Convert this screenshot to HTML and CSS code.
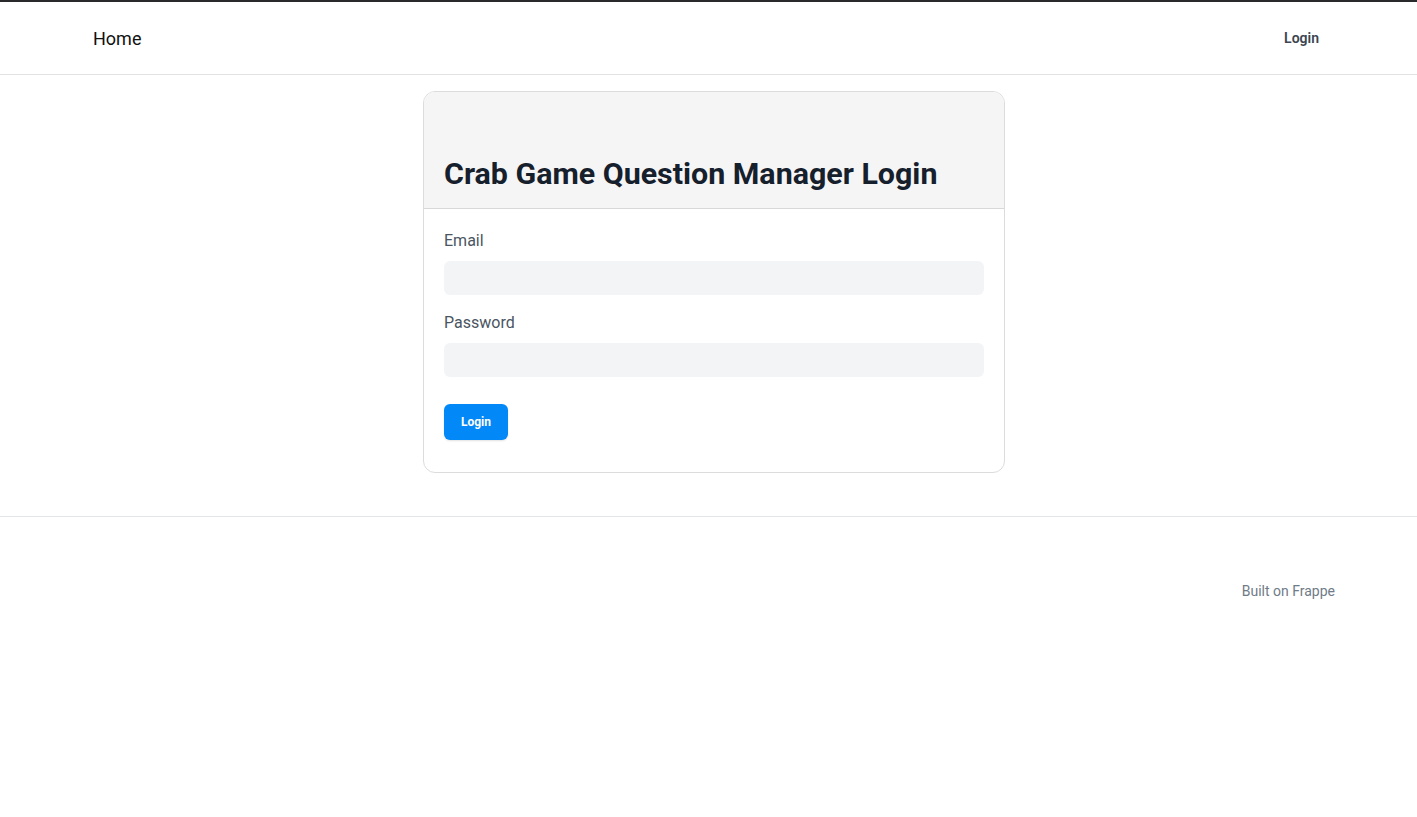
FILE: index.html
```html
<!DOCTYPE html>
<html>
<head>
<meta charset="utf-8">
<link rel="stylesheet" href="styles.css">
</head>
<body>
<header class="navbar">
  <a class="brand" href="#">Home</a>
  <a class="nav-login" href="#">Login</a>
</header>
<main class="main">
  <div class="card">
    <div class="card-header">
      <h1 class="title">Crab Game Question Manager Login</h1>
    </div>
    <div class="card-body">
      <label class="label">Email</label>
      <div class="input"></div>
      <label class="label">Password</label>
      <div class="input"></div>
      <button class="btn">Login</button>
    </div>
  </div>
</main>
<footer class="footer">
  <span class="built">Built on Frappe</span>
</footer>
</body>
</html>
```
FILE: styles.css
```css
* { box-sizing: border-box; }
html, body { margin: 0; padding: 0; }
body {
  font-family: Roboto, "Liberation Sans", sans-serif;
  background: #fff;
  border-top: 2px solid #2a2a2c;
}
a { text-decoration: none; }
.navbar {
  height: 73px;
  border-bottom: 1px solid #e2e2e2;
  display: flex;
  align-items: center;
  justify-content: space-between;
  padding: 0 98px 0 93px;
}
.brand {
  font-size: 18px;
  color: #111;
  margin-top: 1px;
}
.nav-login {
  font-size: 14px;
  font-weight: 600;
  color: #3c4550;
  margin-top: -1px;
}
.main {
  display: flex;
  justify-content: center;
  padding: 16px 0 43px 11px;
  border-bottom: 1px solid #e2e6ea;
}
.card {
  width: 582px;
  border: 1px solid #dcdcdc;
  border-radius: 12px;
  overflow: hidden;
}
.card-header {
  background: #f5f5f5;
  border-bottom: 1px solid #d8d8d8;
  height: 117px;
  padding: 0 20px;
  display: flex;
  align-items: flex-end;
}
.title {
  margin: 0 0 16px 0;
  font-size: 30.4px;
  font-weight: 700;
  color: #15202c;
  line-height: 36px;
  white-space: nowrap;
}
.card-body {
  padding: 21px 20px 32px 20px;
  display: flex;
  flex-direction: column;
  align-items: flex-start;
}
.label {
  font-size: 16px;
  color: #4a5561;
  line-height: 22px;
  margin-bottom: 9px;
}
.input {
  width: 100%;
  height: 34px;
  background: #f3f4f6;
  border-radius: 6px;
  margin-bottom: 17px;
}
.btn {
  margin-top: 10px;
  width: 64px;
  height: 36px;
  border: none;
  border-radius: 6px;
  background: #0288f7;
  color: #fff;
  font-family: Roboto, "Liberation Sans", sans-serif;
  font-size: 12px;
  font-weight: 700;
  box-shadow: 0 1px 2px rgba(0,0,0,0.12);
}
.footer {
  display: flex;
  justify-content: flex-end;
  padding: 66px 82px 0 0;
}
.built {
  font-size: 14px;
  color: #6f7b87;
}
```
